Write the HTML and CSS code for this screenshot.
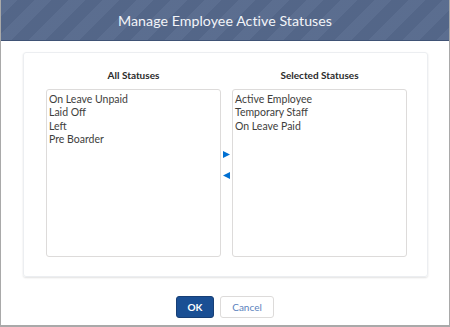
FILE: index.html
```html
<!DOCTYPE html>
<html>
<head>
<meta charset="utf-8">
<link rel="stylesheet" href="styles.css">
</head>
<body>
<div class="modal">
  <div class="modal-header"><h2 class="title">Manage Employee Active Statuses</h2></div>
  <div class="modal-body">
    <div class="card">
      <div class="dual">
        <div class="col">
          <div class="col-label">All Statuses</div>
          <ul class="listbox">
            <li>On Leave Unpaid</li>
            <li>Laid Off</li>
            <li>Left</li>
            <li>Pre Boarder</li>
          </ul>
        </div>
        <div class="arrows">
          <svg class="arrow" width="7" height="7" viewBox="0 0 7 7"><path d="M0 0 L7 3.5 L0 7 Z"/></svg>
          <svg class="arrow" width="7" height="7" viewBox="0 0 7 7"><path d="M7 0 L0 3.5 L7 7 Z"/></svg>
        </div>
        <div class="col">
          <div class="col-label">Selected Statuses</div>
          <ul class="listbox">
            <li>Active Employee</li>
            <li>Temporary Staff</li>
            <li>On Leave Paid</li>
          </ul>
        </div>
      </div>
    </div>
  </div>
  <div class="modal-footer">
    <button class="btn btn-brand">OK</button>
    <button class="btn btn-neutral">Cancel</button>
  </div>
</div>
</body>
</html>
```
FILE: styles.css
```css
* { box-sizing: border-box; }
html, body { margin: 0; padding: 0; background: #fff; }
body { font-family: Lato, "Open Sans", sans-serif; color: #3e3e3c; }
.modal {
  width: 450px;
  height: 327px;
  border: 1px solid #a9a9a9;
  border-top: none;
  border-bottom-width: 2px;
  display: flex;
  flex-direction: column;
  background: #fff;
}
.modal-header {
  height: 41px;
  background-color: #56698c;
  background-image: repeating-linear-gradient(135deg, rgba(255,255,255,0.03) 0 12px, rgba(0,0,0,0.03) 12px 24px);
  border-bottom: 1px solid #3f5275;
  display: flex;
  align-items: center;
  justify-content: center;
  padding-top: 1px;
}
.title {
  margin: 0;
  font-weight: 400;
  font-size: 14.2px;
  color: #f2f4f8;
  letter-spacing: 0.05px;
}
.modal-body {
  padding: 11px 21px 0 22px;
}
.card {
  border: 1px solid #eceef1;
  border-radius: 3px;
  box-shadow: 0 1px 2px rgba(0,0,0,0.12);
  padding: 16px 21px 20px 22px;
  height: 225px;
}
.dual {
  display: grid;
  grid-template-columns: 175px 11px 175px;
}
.col-label {
  text-align: center;
  font-size: 10px;
  font-weight: 700;
  color: #2b2b2b;
  height: 20px;
}
.listbox {
  list-style: none;
  margin: 0;
  padding: 3px 2px;
  height: 168px;
  border: 1px solid #dddbda;
  border-radius: 3px;
  font-size: 10.5px;
  line-height: 13.3px;
  color: #3e3e3c;
}
.arrows {
  display: flex;
  flex-direction: column;
  align-items: center;
  padding-top: 82px;
  gap: 14px;
}
.arrow { display: block; fill: #0070d2; }
.modal-footer {
  margin-top: 19px;
  display: flex;
  justify-content: center;
  gap: 6px;
}
.btn {
  font-family: inherit;
  height: 22px;
  border-radius: 3px;
  font-size: 10px;
  padding: 0;
  cursor: pointer;
}
.btn-brand {
  width: 38px;
  background: #1a4f94;
  border: 1px solid #173f76;
  color: #fff;
  font-weight: 700;
}
.btn-neutral {
  width: 54px;
  background: #fff;
  border: 1px solid #dddbda;
  color: #5a82bd;
}
```
